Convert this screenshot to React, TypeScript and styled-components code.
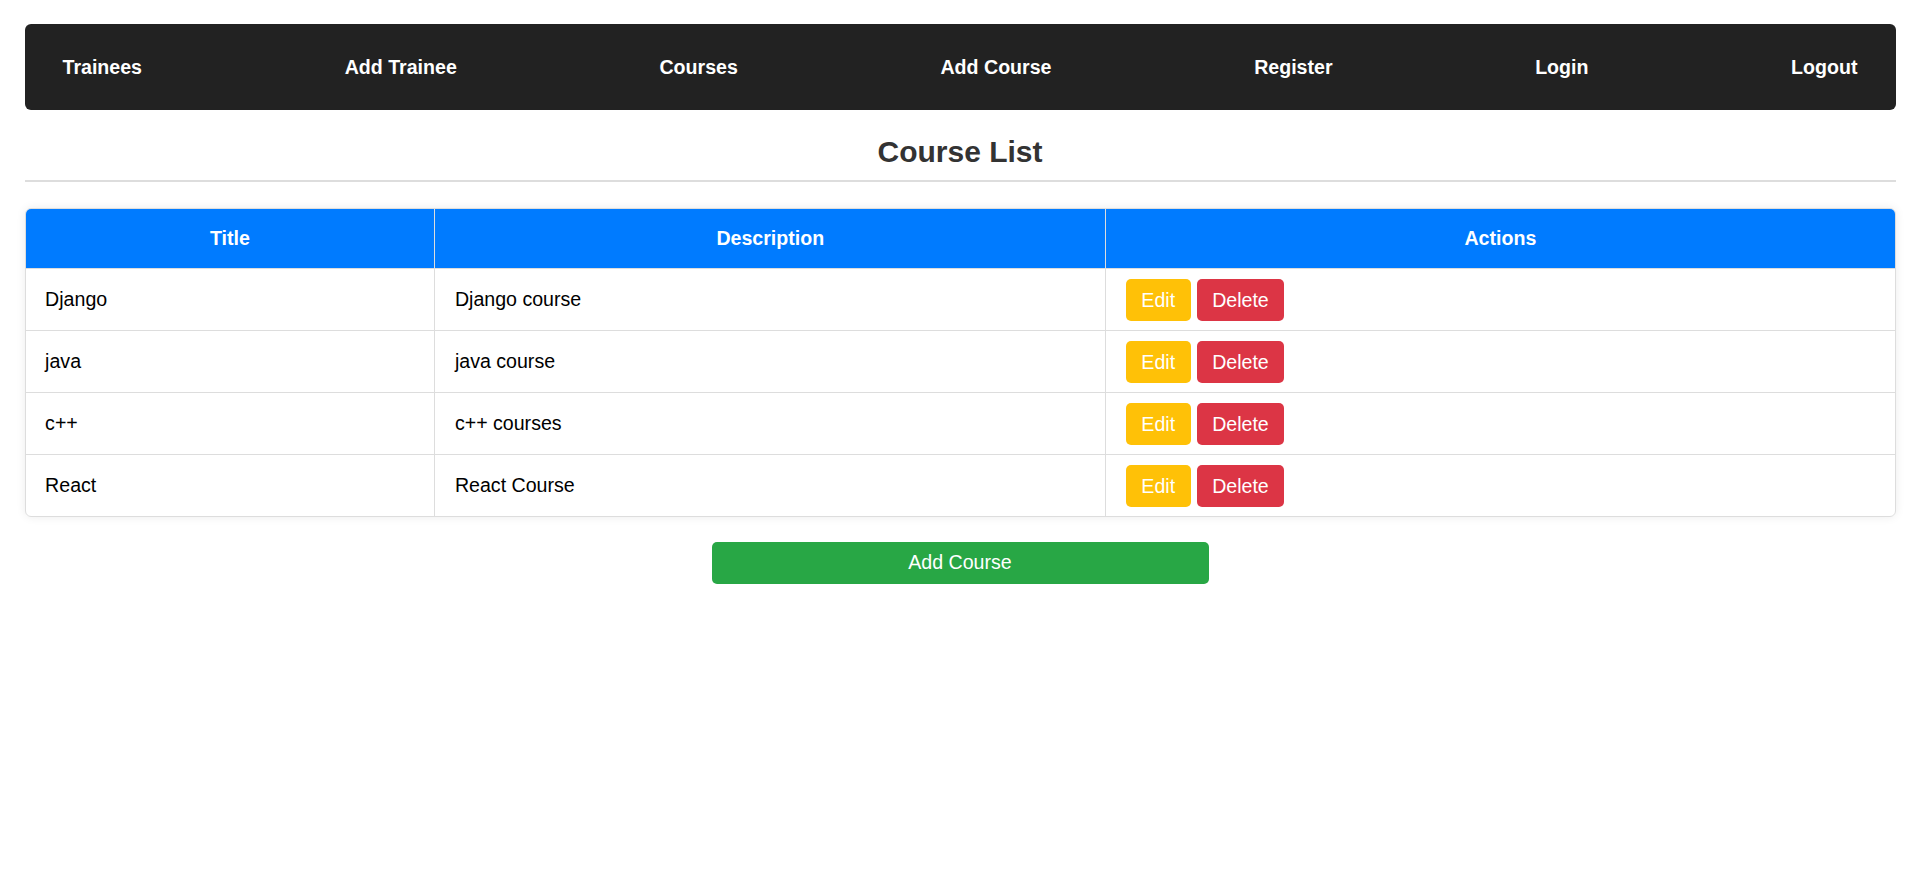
import * as React from 'react';
import styled, { createGlobalStyle } from 'styled-components';

const GlobalStyle = createGlobalStyle`
    html, body {
        margin: 0;
        padding: 0;
        background: #fff;
        font-family: "Liberation Sans", Arial, sans-serif;
    }
`;

const Page = styled.div`
    padding: 24px 24.5px;
    display: flex;
    flex-direction: column;
`;

const NavBar = styled.nav`
    display: flex;
    justify-content: space-between;
    align-items: center;
    height: 86px;
    padding: 0 38px;
    background: #222;
    border-radius: 6px;
`;

const NavLink = styled.a`
    color: #fff;
    font-size: 19.6px;
    font-weight: bold;
    text-decoration: none;
`;

const Heading = styled.h2`
    margin: 24.5px 0 0;
    padding-bottom: 11.5px;
    border-bottom: 2px solid #ddd;
    text-align: center;
    color: #333;
    font-size: 30px;
    font-weight: bold;
    line-height: normal;
`;

const TableCard = styled.div`
    margin-top: 25.5px;
    border: 1px solid #ddd;
    border-radius: 6px;
    overflow: hidden;
    box-shadow: 0 0 10px rgba(0, 0, 0, 0.08);
`;

const Table = styled.table`
    width: 100%;
    border-collapse: collapse;
    table-layout: fixed;
`;

const HeadCell = styled.th`
    background: #007bff;
    color: #fff;
    font-size: 19.6px;
    font-weight: bold;
    text-align: center;
    padding: 18.6px 19.6px;
    line-height: 22.5px;
    border-right: 1px solid #ddd;
    border-bottom: 1px solid #ddd;

    &:last-child {
        border-right: none;
    }
`;

const Cell = styled.td`
    color: #000;
    font-size: 19.6px;
    padding: 9.5px 19.6px;
    line-height: 22.5px;
    vertical-align: middle;
    border-right: 1px solid #ddd;
    border-bottom: 1px solid #ddd;

    &:last-child {
        border-right: none;
    }
`;

const Row = styled.tr`
    &:last-child td {
        border-bottom: none;
    }
`;

interface ActionProps {
    tone: 'edit' | 'delete';
}

const ActionButton = styled.button<ActionProps>`
    display: inline-block;
    margin-right: 6px;
    padding: 8px 15.5px;
    border: none;
    border-radius: 5px;
    font-family: inherit;
    font-size: 19.6px;
    line-height: 26px;
    color: #fff;
    background: ${(props) => (props.tone === 'edit' ? '#ffc107' : '#dc3545')};
    cursor: pointer;
`;

const AddButton = styled.button`
    align-self: center;
    width: 497px;
    height: 42px;
    margin-top: 24.5px;
    border: none;
    border-radius: 5px;
    background: #28a745;
    color: #fff;
    font-family: inherit;
    font-size: 19.6px;
    cursor: pointer;
`;

const links = ['Trainees', 'Add Trainee', 'Courses', 'Add Course', 'Register', 'Login', 'Logout'];

const courses = [
    { title: 'Django', description: 'Django course' },
    { title: 'java', description: 'java course' },
    { title: 'c++', description: 'c++ courses' },
    { title: 'React', description: 'React Course' },
];

export default function App() {
    return (
        <>
            <GlobalStyle />
            <Page>
                <NavBar>
                    {links.map((link) => (
                        <NavLink key={link} href="#">{link}</NavLink>
                    ))}
                </NavBar>
                <Heading>Course List</Heading>
                <TableCard>
                    <Table>
                        <colgroup>
                            <col style={{ width: '21.9%' }} />
                            <col style={{ width: '35.9%' }} />
                            <col style={{ width: '42.2%' }} />
                        </colgroup>
                        <thead>
                            <tr>
                                <HeadCell>Title</HeadCell>
                                <HeadCell>Description</HeadCell>
                                <HeadCell>Actions</HeadCell>
                            </tr>
                        </thead>
                        <tbody>
                            {courses.map((course) => (
                                <Row key={course.title}>
                                    <Cell>{course.title}</Cell>
                                    <Cell>{course.description}</Cell>
                                    <Cell>
                                        <ActionButton tone="edit">Edit</ActionButton>
                                        <ActionButton tone="delete">Delete</ActionButton>
                                    </Cell>
                                </Row>
                            ))}
                        </tbody>
                    </Table>
                </TableCard>
                <AddButton>Add Course</AddButton>
            </Page>
        </>
    );
}
